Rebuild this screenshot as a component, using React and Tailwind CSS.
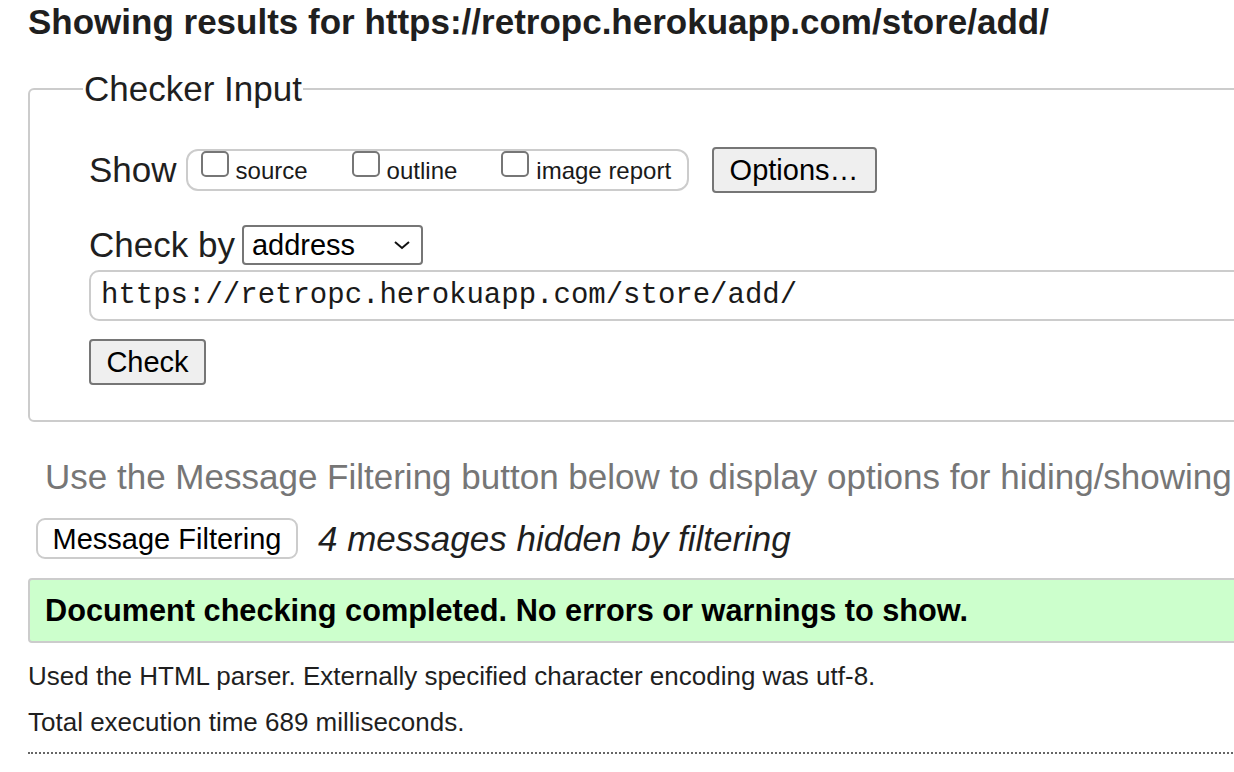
import React from 'react';

const FONT = { fontFamily: '"Liberation Sans", Arial, sans-serif' };

function Box({ label, className = '' }) {
  return (
    <span className={`inline-flex items-start ${className}`}>
      <span className="w-[28px] h-[26px] rounded-[5px] border-2 border-[#767676] bg-white" />
      <span className="ml-[7px] mt-[6px] text-[24px] leading-[28px] text-[#1a1a1a]">{label}</span>
    </span>
  );
}

export default function App() {
  return (
    <div className="w-[1234px] h-[772px] overflow-hidden bg-white text-[#1f1f1f]" style={FONT}>
      <div className="w-[1500px] pl-[28px]">
        <h2 className="pt-[2px] text-[35px] leading-[40px] font-bold text-[#1f1f1f] whitespace-nowrap">
          Showing results for https://retropc.herokuapp.com/store/add/
        </h2>

        {/* Checker input */}
        <fieldset className="mt-[27px] border-2 border-[#cccccc] rounded-[6px] pl-[59px] pb-[35px]">
          <legend className="-ml-[6px] px-[1px] text-[35px] leading-[40px] text-[#1f1f1f]">Checker Input</legend>

          <div className="flex items-center mt-[38px] h-[46px]">
            <span className="text-[35px] leading-[40px] text-[#1f1f1f]">Show</span>
            <div className="ml-[9px] w-[503px] h-[42px] border-2 border-[#cccccc] rounded-[12px] flex items-start pl-[13px]">
              <Box label="source" />
              <Box label="outline" className="ml-[44px]" />
              <Box label="image report" className="ml-[44px]" />
            </div>
            <button className="ml-[23px] w-[165px] h-[46px] bg-[#efefef] border-2 border-[#767676] rounded-[4px] text-[29px] leading-[32px] text-black">
              Options…
            </button>
          </div>

          <div className="flex items-center mt-[32px] h-[40px]">
            <span className="text-[35px] leading-[40px] text-[#1f1f1f]">Check by</span>
            <div className="ml-[7px] w-[181px] h-[40px] border-2 border-[#767676] rounded-[4px] bg-white flex items-center pl-[8px] pr-[10px]">
              <span className="flex-1 text-[29px] leading-[32px] text-black">address</span>
              <svg width="18" height="10" viewBox="0 0 18 10" fill="none" stroke="#111" strokeWidth="2">
                <path d="M2 2l7 6 7-6" />
              </svg>
            </div>
          </div>

          <div className="mt-[5px] h-[51px] border-2 border-[#cccccc] rounded-[10px] flex items-center pl-[10px]">
            <span className="text-[29px] leading-[34px] text-[#1a1a1a] whitespace-nowrap" style={{ fontFamily: '"Liberation Mono", "Courier New", monospace' }}>
              https://retropc.herokuapp.com/store/add/
            </span>
          </div>

          <button className="mt-[18px] w-[117px] h-[46px] bg-[#efefef] border-2 border-[#767676] rounded-[4px] text-[29px] leading-[32px] text-black">
            Check
          </button>
        </fieldset>

        <p className="mt-[35px] ml-[17px] text-[35px] leading-[40px] text-[#767676] whitespace-nowrap">
          Use the Message Filtering button below to display options for hiding/showing
        </p>

        <div className="flex items-center mt-[21px] h-[41px]">
          <button className="ml-[8px] w-[262px] h-[41px] bg-white border-2 border-[#cccccc] rounded-[9px] text-[29px] leading-[32px] text-black">
            Message Filtering
          </button>
          <span className="ml-[20px] text-[35px] leading-[40px] italic text-[#1f1f1f] whitespace-nowrap">4 messages hidden by filtering</span>
        </div>

        <div className="mt-[19px] h-[65px] bg-[#ccffcc] border-2 border-[#cccccc] rounded-[4px] flex items-center pl-[15px]">
          <span className="text-[30.7px] leading-[36px] font-bold text-black whitespace-nowrap">
            Document checking completed. No errors or warnings to show.
          </span>
        </div>

        <p className="mt-[18px] text-[26px] leading-[30px] text-[#1f1f1f] whitespace-nowrap">
          Used the HTML parser. Externally specified character encoding was utf-8.
        </p>
        <p className="mt-[16px] text-[26px] leading-[30px] text-[#1f1f1f]">Total execution time 689 milliseconds.</p>

        <div className="mt-[15px] border-t-2 border-dotted border-[#666666]" />
      </div>
    </div>
  );
}
